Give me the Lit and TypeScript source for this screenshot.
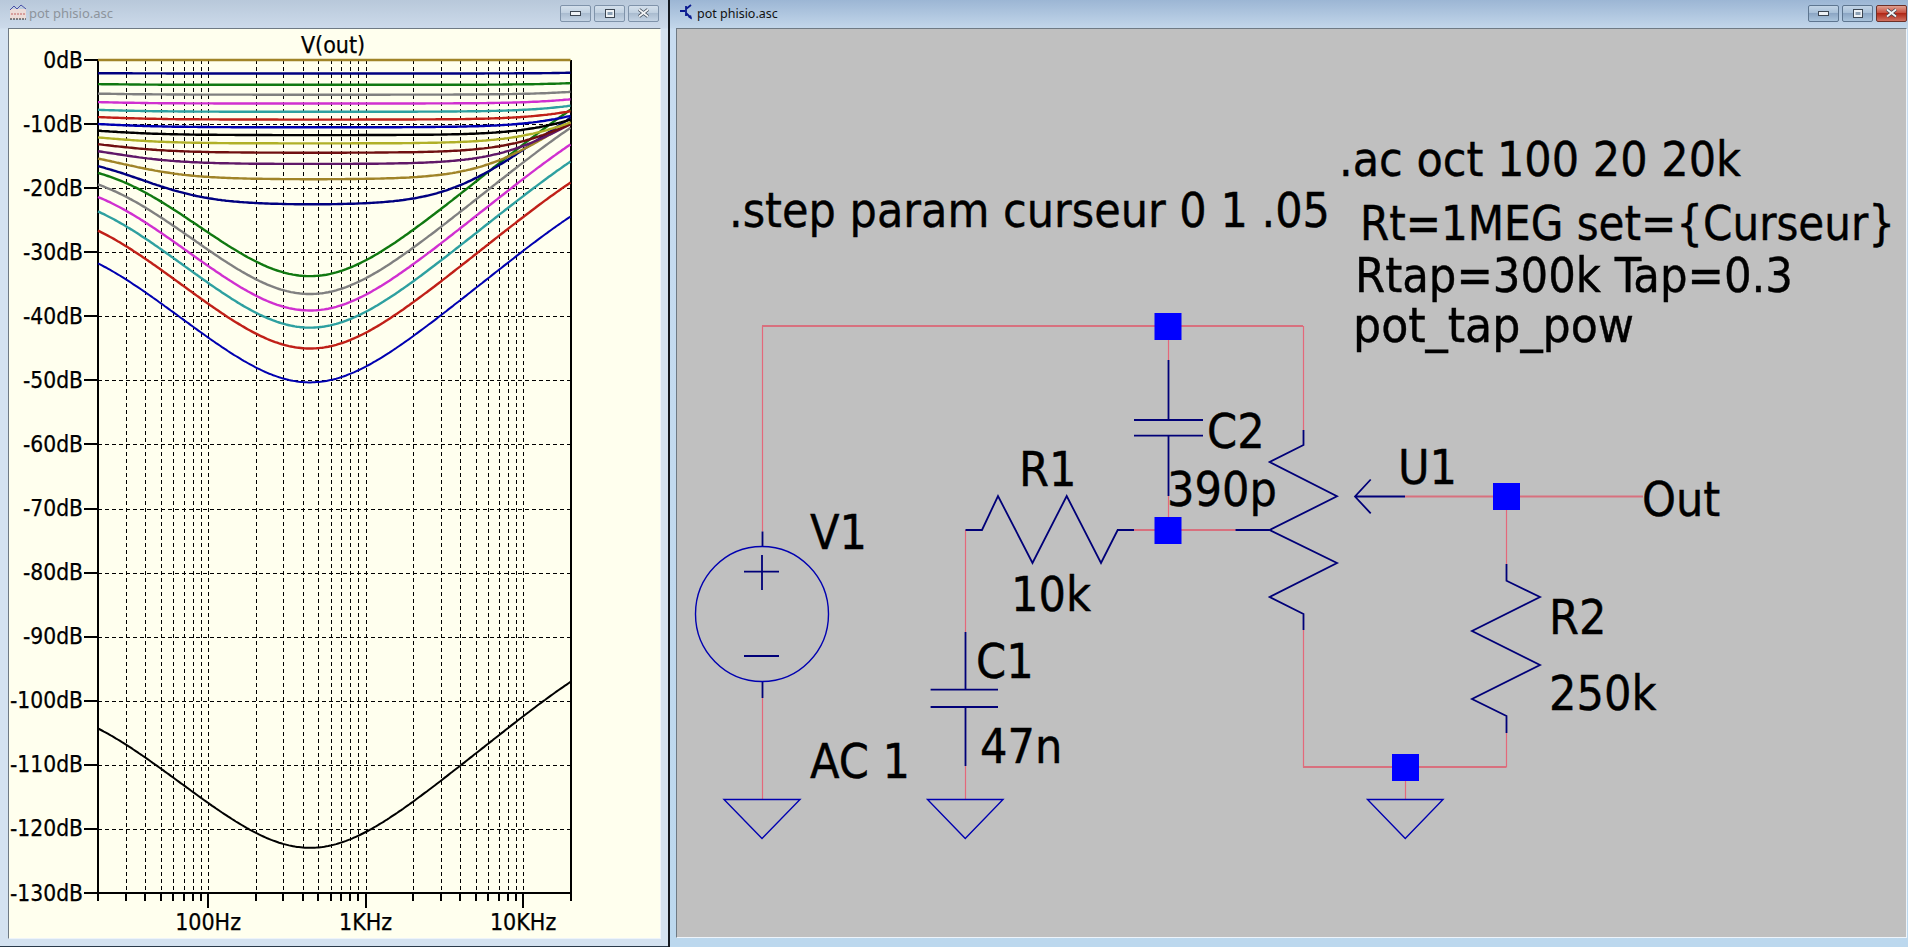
import { LitElement, html, svg, css, nothing } from "lit";
import { customElement } from "lit/decorators.js";

// one trace per .step of "curseur", colours repeat every 12 traces
const TRACE_COLORS = [
  "#000000", "#0000b0", "#c02018", "#2ea0a0", "#d030d0", "#808080",
  "#107810", "#000080", "#a08428", "#601868", "#701010", "#b0b028",
];

const STEPS = 21;
const PLOT = { left: 98, right: 570.5, top: 60, bottom: 893, dbStep: 64.08 };
const decade = (PLOT.right - PLOT.left) / 3;

const xOf = (f: number) => PLOT.left + Math.log10(f / 20) * decade;
const yOf = (db: number) => PLOT.top - (db / 10) * PLOT.dbStep;
const snap = (v: number) => Math.round(v) + 0.5;

type C = [number, number];
const add = (a: C, b: C): C => [a[0] + b[0], a[1] + b[1]];
const sub = (a: C, b: C): C => [a[0] - b[0], a[1] - b[1]];
const mul = (a: C, b: C): C => [a[0] * b[0] - a[1] * b[1], a[0] * b[1] + a[1] * b[0]];
const div = (a: C, b: C): C => {
  const d = b[0] * b[0] + b[1] * b[1];
  return [(a[0] * b[0] + a[1] * b[1]) / d, (a[1] * b[0] - a[0] * b[1]) / d];
};

// node voltages of the tapped pot circuit, solved for the wiper
function gainDb(f: number, cursor: number) {
  const w = 2 * Math.PI * f;
  const yC2: C = [0, w * 390e-12];
  const ySeries = div([1, 0], [10e3, -1 / (w * 47e-9)]);
  const yR2: C = [1 / 250e3, 0];
  const rw = Math.max(cursor * 1e6, 10);
  let a: C, b: C, c: C, d: C, e: C, g: C;
  if (rw <= 300e3) {
    const gb: C = [1 / Math.max(300e3 - rw, 1), 0];
    const gg: C = [1 / rw, 0];
    a = add(add(add(yC2, [1 / 700e3, 0]), gb), ySeries);
    b = gb;
    c = gb;
    d = add(add(gb, gg), yR2);
    e = add(yC2, [1 / 700e3, 0]);
    g = [0, 0];
  } else {
    const gb: C = [1 / Math.max(rw - 300e3, 1), 0];
    const ga: C = [1 / Math.max(1e6 - rw, 1), 0];
    a = add(add(add(yC2, gb), [1 / 300e3, 0]), ySeries);
    b = gb;
    c = gb;
    d = add(add(ga, gb), yR2);
    e = yC2;
    g = ga;
  }
  const det = sub(mul(a, d), mul(b, c));
  const vw = div(add(mul(a, g), mul(c, e)), det);
  return 20 * Math.log10(Math.hypot(vw[0], vw[1]));
}

function tracePoints(cursor: number) {
  const pts: string[] = [];
  for (let i = 0; i <= 240; i++) {
    const f = 20 * Math.pow(1000, i / 240);
    pts.push(`${xOf(f).toFixed(1)},${yOf(gainDb(f, cursor)).toFixed(1)}`);
  }
  return pts.join(" ");
}

const FREQ_LINES: number[] = [];
for (const m of [10, 100, 1000]) {
  for (let k = 2; k <= 10; k++) {
    const f = m * k;
    if (f > 20 && f < 20000) FREQ_LINES.push(f);
  }
}
const MAJOR = [100, 1000, 10000];
const FREQ_LABELS: [number, string][] = [[100, "100Hz"], [1000, "1KHz"], [10000, "10KHz"]];

@customElement("plot-pane")
class PlotPane extends LitElement {
  static styles = css`
    :host { display: block; width: 100%; height: 100%; }
    svg { display: block; width: 100%; height: 100%; background: #ffffee; }
    text {
      font-family: "DejaVu Sans Condensed", "DejaVu Sans", sans-serif;
      font-stretch: condensed;
      font-size: 23px;
      fill: #000;
      stroke: #000;
      stroke-width: 0.25;
    }
    .db { font-size: 22.6px; }
    .grid { stroke: #000; stroke-width: 1; stroke-dasharray: 4 3; fill: none; shape-rendering: crispEdges; }
    .axis { stroke: #000; stroke-width: 2; fill: none; shape-rendering: crispEdges; }
    .trace { fill: none; stroke-width: 2.4; }
    .trace.thin { stroke-width: 2; }
  `;

  render() {
    const dbs = Array.from({ length: 14 }, (_, i) => -i * 10);
    const traces = Array.from({ length: STEPS }, (_, i) => i);
    return html`
      <svg viewBox="9 29 651 909">
        ${FREQ_LINES.map((f) => svg`
          <line class="grid" x1=${snap(xOf(f))} x2=${snap(xOf(f))} y1=${PLOT.top} y2=${PLOT.bottom}></line>
          <line class="axis" x1=${Math.round(xOf(f))} x2=${Math.round(xOf(f))} y1=${PLOT.bottom}
            y2=${MAJOR.includes(f) ? 908 : 901}></line>`)}
        ${dbs.map((db) => svg`
          ${db < 0 && db > -130 ? svg`<line class="grid" x1=${PLOT.left} x2=${PLOT.right} y1=${snap(yOf(db))} y2=${snap(yOf(db))}></line>` : ""}
          <line class="axis" x1="84" x2=${PLOT.left} y1=${Math.round(yOf(db))} y2=${Math.round(yOf(db))}></line>
          <text class="db" x="83" y=${yOf(db) + 7.5} text-anchor="end">${db}dB</text>`)}
        <path class="axis" d="M${PLOT.left} ${PLOT.top}V${PLOT.bottom}H${PLOT.right}V${PLOT.top}
          M${PLOT.left} ${PLOT.bottom}v8M${PLOT.right} ${PLOT.bottom}v8"></path>
        ${traces.map((i) => svg`
          <polyline class="trace ${i === 0 || i === 1 ? "thin" : ""}"
            points=${tracePoints(i * 0.05)} stroke=${TRACE_COLORS[i % 12]}></polyline>`)}
        <text x="333" y="53" text-anchor="middle">V(out)</text>
        ${FREQ_LABELS.map(([f, t]) => svg`
          <text x=${xOf(f)} y="930" text-anchor="middle">${t}</text>`)}
      </svg>
    `;
  }
}

// wire segments (red) and symbol strokes (navy), in screen pixels
const WIRES = [
  "M762.5 326H1303", "M762.5 326V531.5", "M762.5 698V799.5",
  "M965.5 530V632", "M965.5 766V799.5",
  "M1134 530H1235.5", "M1168.5 340V360", "M1168.5 496V517",
  "M1303.5 326V430", "M1303.5 630V767H1506.5V733",
  "M1405 496.5H1643", "M1506.5 510V564", "M1405.5 781V799.5",
];
const THICK_WIRES = ["M762 326H1303", "M1134 530H1235.5", "M1405 496.5H1643", "M1303 767H1506"];
const SYMBOLS = [
  "M762.5 531.5V546.5", "M762.5 681V698", "M744 571.7H779M762 555V590", "M744 656H779",
  "M965.5 530H982L998 496L1032.5 563L1066.7 496L1101 563L1117.7 530H1134",
  "M965.5 632V689.6M930.6 689.6H998M930.6 707H998M965.5 707V766",
  "M1168.5 360V420M1134 420H1203M1134 435.6H1203M1168.5 435.6V496",
  "M1303.5 430V445L1269.7 462L1337 496.3L1269.7 530L1337 563L1269.7 597L1303.5 614V630",
  "M1235.5 530H1269.7",
  "M1370.7 479.5L1355 496.5L1370.7 513.4M1355 496.5H1405",
  "M1506.5 564V580.7L1540 597L1472 631L1540 665L1472 699L1506.5 716V733",
];
const GROUNDS: [number, number][] = [[724, 800], [927.5, 1003], [1367.5, 1443]];
const JUNCTIONS: [number, number][] = [[1168, 326.5], [1168, 530.5], [1506.5, 496.5], [1405.5, 767.5]];
// x, baseline, text, and for the directives the width they take in the reference
const LABELS: [number, number, string, number?][] = [
  [1339, 176, ".ac oct 100 20 20k", 402],
  [729, 227, ".step param curseur 0 1 .05", 601],
  [1360, 240, "Rt=1MEG set={Curseur}", 535],
  [1355, 292, "Rtap=300k Tap=0.3", 438],
  [1353, 342, "pot_tap_pow", 281],
  [810, 549, "V1"],
  [810, 778, "AC 1"],
  [1019, 485.5, "R1"],
  [1011, 611, "10k"],
  [976, 678, "C1"],
  [980, 763, "47n"],
  [1207, 447.5, "C2"],
  [1167, 506, "390p"],
  [1398, 484, "U1"],
  [1642, 516, "Out"],
  [1549, 634, "R2"],
  [1549, 710, "250k"],
];

@customElement("schematic-pane")
class SchematicPane extends LitElement {
  static styles = css`
    :host { display: block; width: 100%; height: 100%; }
    svg { display: block; width: 100%; height: 100%; background: #c0c0c0; }
    text {
      font-family: "DejaVu Sans Condensed", "DejaVu Sans", sans-serif;
      font-stretch: condensed;
      font-size: 48px;
      fill: #000;
      stroke: #000;
      stroke-width: 0.4;
    }
    path, ellipse { fill: none; }
    .wire { stroke: #e4687a; stroke-width: 1.2; }
    .wire.thick { stroke: #d8707e; stroke-width: 2; }
    .sym { stroke: #000078; stroke-width: 1.8; }
    .gnd { stroke: #0000b0; stroke-width: 1.4; }
    .dot { fill: #0000ff; }
  `;

  render() {
    return html`
      <svg viewBox="677 29 1229 908">
        ${WIRES.map((d) => svg`<path class="wire" d=${d}></path>`)}
        ${THICK_WIRES.map((d) => svg`<path class="wire thick" d=${d}></path>`)}
        ${SYMBOLS.map((d) => svg`<path class="sym" d=${d}></path>`)}
        <ellipse class="gnd" cx="762" cy="614" rx="66.5" ry="67.5"></ellipse>
        ${GROUNDS.map(([a, b]) => svg`
          <path class="gnd" d="M${a} 799.5H${b}L${(a + b) / 2} 838.5Z"></path>`)}
        ${JUNCTIONS.map(([x, y]) => svg`
          <rect class="dot" x=${x - 13.5} y=${y - 13.5} width="27" height="27"></rect>`)}
        ${LABELS.map(([x, y, t, w]) => svg`
          <text x=${x} y=${y} textLength=${w ?? nothing}
            lengthAdjust=${w ? "spacingAndGlyphs" : nothing}>${t}</text>`)}
      </svg>
    `;
  }
}

@customElement("app-root")
class AppRoot extends LitElement {
  static styles = css`
    :host {
      display: flex;
      width: 1908px;
      height: 947px;
      background: #c8dcf0;
      overflow: hidden;
      font-family: "Noto Sans", sans-serif;
    }
    .win {
      display: flex;
      flex-direction: column;
      box-sizing: border-box;
      height: 947px;
    }
    .plot-win {
      width: 668px;
      padding: 0 7px 7px 8px;
      border-bottom: 1px solid #2a3a4a;
      background: linear-gradient(#b8c8da 0, #ccdaea 28px, #d4e2f0 29px, #d4e2f0 100%);
    }
    .sch-win {
      flex: 1;
      padding: 0 1px 9px 6px;
      border-left: 2px solid #14181e;
      background: linear-gradient(#9cb6d4 0, #c2d6ea 28px, #c8dcf0 29px, #bcd8ee 100%);
    }
    .bar {
      display: flex;
      align-items: center;
      height: 28px;
      flex: none;
      gap: 3px;
      box-sizing: border-box;
      padding: 0 0 4px 2px;
    }
    .plot-win .bar { padding-right: 2px; }
    .sch-win .bar { padding-left: 4px; }
    .title {
      font-size: 12.5px;
      margin-left: 1px;
      margin-top: 2px;
      color: #111;
      flex: 1;
    }
    .plot-win .title { color: #8d949c; font-size: 13px; margin-left: 0; }
    .btn {
      flex: none;
      width: 31px;
      height: 17px;
      margin-top: 2px;
      display: flex;
      align-items: center;
      justify-content: center;
      box-sizing: border-box;
      border: 1px solid #7f93aa;
      border-radius: 2px;
      background: linear-gradient(#d4e0ec, #c0d0e0 45%, #aabcd0 50%, #c4d4e4);
    }
    .sch-win .btn {
      background: linear-gradient(#c2d4e6, #a8c0d8 45%, #8ca6c4 50%, #aac4dc);
      border-color: #5e7690;
    }
    .sch-win .btn.close {
      background: linear-gradient(#e0a090, #c85040 45%, #b02818 50%, #d07060);
      border-color: #6c3028;
    }
    .btn svg { display: block; }
    .client {
      flex: 1;
      min-height: 0;
      box-sizing: border-box;
      border-style: solid;
      border-width: 1px;
      border-color: #6f7a84 #eef4fa #eef4fa #6f7a84;
    }
  `;

  buttons() {
    return html`
      <div class="btn">
        <svg width="11" height="6" viewBox="0 0 11 6"><rect x=".5" y="1.5" width="10" height="4" fill="#eef2f6" stroke="#3c4652"/></svg>
      </div>
      <div class="btn">
        <svg width="10" height="9" viewBox="0 0 10 9"><rect x=".5" y=".5" width="9" height="8" fill="#eef2f6" stroke="#3c4652"/><rect x="2.5" y="3" width="5" height="3" fill="#8ca0b4"/></svg>
      </div>
      <div class="btn close">
        <svg width="13" height="10" viewBox="0 0 13 10"><path d="M2 1.5L11 8.5M11 1.5L2 8.5" stroke="#3c4652" stroke-width="3.4"/><path d="M2 1.5L11 8.5M11 1.5L2 8.5" stroke="#f4f6f8" stroke-width="1.8"/></svg>
      </div>
    `;
  }

  render() {
    return html`
      <div class="win plot-win">
        <div class="bar">
          <svg width="16" height="16" viewBox="0 0 16 16">
            <rect x="0" y="5" width="16" height="10" fill="#ecdcd8"></rect>
            <path d="M0 6L4 2L7 5L11 1L16 5" fill="none" stroke="#4a50a8"></path>
            <path d="M1 10h14" stroke="#c06060" stroke-dasharray="2 1"></path>
            <path d="M0 15h16" stroke="#222" stroke-dasharray="2 1"></path>
          </svg>
          <span class="title">pot phisio.asc</span>
          ${this.buttons()}
        </div>
        <div class="client"><plot-pane></plot-pane></div>
      </div>
      <div class="win sch-win">
        <div class="bar">
          <svg width="13" height="16" viewBox="0 0 13 16">
            <path d="M0 7H5M6 2V12M6 5L11 1M6 9L11 14" fill="none" stroke="#0a1a90" stroke-width="1.8"></path>
            <path d="M8 13l4 2.5l-1-4.5z" fill="#0a1a90"></path>
          </svg>
          <span class="title">pot phisio.asc</span>
          ${this.buttons()}
        </div>
        <div class="client"><schematic-pane></schematic-pane></div>
      </div>
    `;
  }
}
